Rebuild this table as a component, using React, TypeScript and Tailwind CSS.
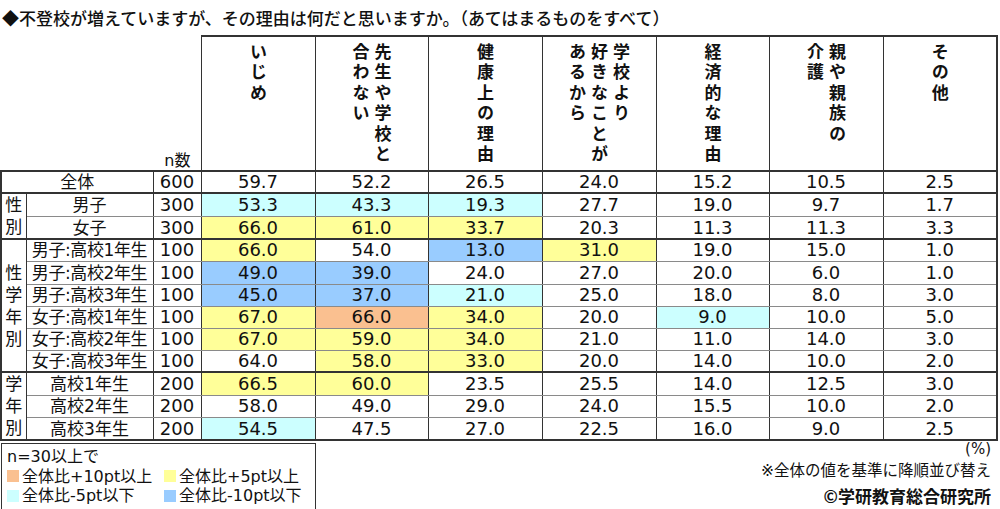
import React from "react";

type Row = { label: string; n: string; vals: string[]; h: string };

const BG: Record<string, string> = {
  o: "bg-[#fac090]",
  y: "bg-[#ffff99]",
  c: "bg-[#ccffff]",
  b: "bg-[#99ccff]",
};

const headers: string[][] = [
  ["いじめ"],
  ["先生や学校と", "合わない"],
  ["健康上の理由"],
  ["学校より", "好きなことが", "あるから"],
  ["経済的な理由"],
  ["親や親族の", "介護"],
  ["その他"],
];

const all: Row = { label: "全体", n: "600", vals: ["59.7", "52.2", "26.5", "24.0", "15.2", "10.5", "2.5"], h: "h-[22px]" };

const g1: Row[] = [
  { label: "男子", n: "300", vals: ["53.3c", "43.3c", "19.3c", "27.7", "19.0", "9.7", "1.7"], h: "h-[23px]" },
  { label: "女子", n: "300", vals: ["66.0y", "61.0y", "33.7y", "20.3", "11.3", "11.3", "3.3"], h: "h-[22px]" },
];

const g2: Row[] = [
  { label: "男子:高校1年生", n: "100", vals: ["66.0y", "54.0", "13.0b", "31.0y", "19.0", "15.0", "1.0"], h: "h-[22px]" },
  { label: "男子:高校2年生", n: "100", vals: ["49.0b", "39.0b", "24.0", "27.0", "20.0", "6.0", "1.0"], h: "h-[23px]" },
  { label: "男子:高校3年生", n: "100", vals: ["45.0b", "37.0b", "21.0c", "25.0", "18.0", "8.0", "3.0"], h: "h-[22px]" },
  { label: "女子:高校1年生", n: "100", vals: ["67.0y", "66.0o", "34.0y", "20.0", "9.0c", "10.0", "5.0"], h: "h-[22px]" },
  { label: "女子:高校2年生", n: "100", vals: ["67.0y", "59.0y", "34.0y", "21.0", "11.0", "14.0", "3.0"], h: "h-[22px]" },
  { label: "女子:高校3年生", n: "100", vals: ["64.0", "58.0y", "33.0y", "20.0", "14.0", "10.0", "2.0"], h: "h-[22px]" },
];

const g3: Row[] = [
  { label: "高校1年生", n: "200", vals: ["66.5y", "60.0y", "23.5", "25.5", "14.0", "12.5", "3.0"], h: "h-[23px]" },
  { label: "高校2年生", n: "200", vals: ["58.0", "49.0", "29.0", "24.0", "15.5", "10.0", "2.0"], h: "h-[22px]" },
  { label: "高校3年生", n: "200", vals: ["54.5c", "47.5", "27.0", "22.5", "16.0", "9.0", "2.5"], h: "h-[22px]" },
];

const cellBase =
  "p-0 text-center align-middle border-x border-x-[#333] border-y border-y-[#8a8a8a] leading-[20px] text-[#111] whitespace-nowrap";
const numSize = "text-[18px]";
const labelSize = "text-[17px]";

function ValCells({ vals, edge }: { vals: string[]; edge: string }) {
  return (
    <>
      {vals.map((v, i) => {
        const last = v[v.length - 1];
        const tag = /[oycb]/.test(last) ? last : "";
        const txt = tag ? v.slice(0, -1) : v;
        return (
          <td key={i} className={`${cellBase} ${numSize} ${edge} ${tag ? BG[tag] : "bg-white"} ${i === 6 ? "border-r-2 border-r-[#333]" : ""}`}>
            {txt}
          </td>
        );
      })}
    </>
  );
}

function Group({ rows, label, tight }: { rows: Row[]; label: string[]; tight?: boolean }) {
  return (
    <>
      {rows.map((r, i) => {
        const first = i === 0;
        const last = i === rows.length - 1;
        const edge = `${first ? "border-t-2 border-t-[#333]" : ""} ${last ? "border-b-2 border-b-[#333]" : ""}`;
        return (
          <tr key={i} className={r.h}>
            {first && (
              <td
                rowSpan={rows.length}
                className="p-0 text-center align-middle border-l-2 border-l-[#333] border-r border-r-[#333] border-y-2 border-y-[#333] text-[17px] leading-[22px] text-[#111]"
              >
                {label.map((c, k) => (
                  <div key={k}>{c}</div>
                ))}
              </td>
            )}
            <td className={`${cellBase} ${labelSize} ${tight ? "tracking-[-0.4px]" : ""} ${edge}`}>{r.label}</td>
            <td className={`${cellBase} ${numSize} ${edge}`}>{r.n}</td>
            <ValCells vals={r.vals} edge={edge} />
          </tr>
        );
      })}
    </>
  );
}

export default function App() {
  return (
    <div
      className="w-[1000px] h-[509px] bg-white text-[#111] overflow-hidden"
      style={{ fontFamily: '"DejaVu Sans", "Noto Sans CJK JP", sans-serif' }}
    >
      <div
        className="h-[35px] pl-[2px] pt-[7px] text-[17px] leading-[22px] font-medium whitespace-nowrap"
        style={{ fontFamily: '"Noto Sans CJK JP", sans-serif' }}
      >
        ◆不登校が増えていますが、その理由は何だと思いますか。（あてはまるものをすべて）
      </div>
      <table className="table-fixed border-collapse w-[997px]">
        <colgroup>
          <col className="w-[25px]" />
          <col className="w-[127px]" />
          <col className="w-[48px]" />
          <col className="w-[114px]" />
          <col className="w-[113px]" />
          <col className="w-[114px]" />
          <col className="w-[114px]" />
          <col className="w-[113px]" />
          <col className="w-[114px]" />
          <col className="w-[114px]" />
        </colgroup>
        <thead>
          <tr className="h-[135px]">
            <th colSpan={3} className="p-0 pr-[10px] pb-0 align-bottom text-right font-normal text-[16px] leading-[18px] border-0">
              n数
            </th>
            {headers.map((h, i) => (
              <th
                key={i}
                className={`p-0 pt-[6px] align-top border-x border-x-[#333] border-t-2 border-t-[#333] border-b-2 border-b-[#333] ${i === 6 ? "border-r-2 border-r-[#333]" : ""}`}
              >
                <div className="flex justify-center">
                  <div
                    className="[writing-mode:vertical-rl] text-[17px] leading-[22px] tracking-[3.5px] font-bold text-[#111] text-left"
                    style={{ fontFamily: '"Noto Sans CJK JP", sans-serif' }}
                  >
                    {h.map((line, k) => (
                      <div key={k}>{line}</div>
                    ))}
                  </div>
                </div>
              </th>
            ))}
          </tr>
        </thead>
        <tbody>
          <tr className={all.h}>
            <td colSpan={2} className={`${cellBase} ${labelSize} border-t-2 border-t-[#333] border-b-2 border-b-[#333] border-l-2 border-l-[#333]`}>
              {all.label}
            </td>
            <td className={`${cellBase} ${numSize} border-t-2 border-t-[#333] border-b-2 border-b-[#333]`}>{all.n}</td>
            <ValCells vals={all.vals} edge="border-t-2 border-t-[#333] border-b-2 border-b-[#333]" />
          </tr>
          <Group rows={g1} label={["性", "別"]} />
          <Group rows={g2} label={["性", "学", "年", "別"]} tight />
          <Group rows={g3} label={["学", "年", "別"]} />
        </tbody>
      </table>
      <div className="flex justify-between items-start">
        <div className="ml-[1px] mt-[2px] w-[315px] h-[67px] border border-[#333] px-[5px] pt-[3px] text-[16px] leading-[19.5px] whitespace-nowrap">
          <div>n=30以上で</div>
          <div className="grid grid-cols-[157px_1fr]">
            <div className="flex items-center gap-[3px]">
              <span className="inline-block w-[12px] h-[12px] bg-[#fac090]" />
              <span>全体比+10pt以上</span>
            </div>
            <div className="flex items-center gap-[3px]">
              <span className="inline-block w-[12px] h-[12px] bg-[#ffff99]" />
              <span>全体比+5pt以上</span>
            </div>
            <div className="flex items-center gap-[3px]">
              <span className="inline-block w-[12px] h-[12px] bg-[#ccffff]" />
              <span>全体比-5pt以下</span>
            </div>
            <div className="flex items-center gap-[3px]">
              <span className="inline-block w-[12px] h-[12px] bg-[#99ccff]" />
              <span>全体比-10pt以下</span>
            </div>
          </div>
        </div>
        <div className="flex flex-col items-end pr-[9px] whitespace-nowrap">
          <div className="text-[15px] leading-[16px] mt-[0px]">(%)</div>
          <div className="text-[15.5px] leading-[18px] mt-[5px]">※全体の値を基準に降順並び替え</div>
          <div className="text-[17px] leading-[20px] mt-[6px] font-bold" style={{ fontFamily: '"Noto Sans CJK JP", sans-serif' }}>
            ©学研教育総合研究所
          </div>
        </div>
      </div>
    </div>
  );
}
